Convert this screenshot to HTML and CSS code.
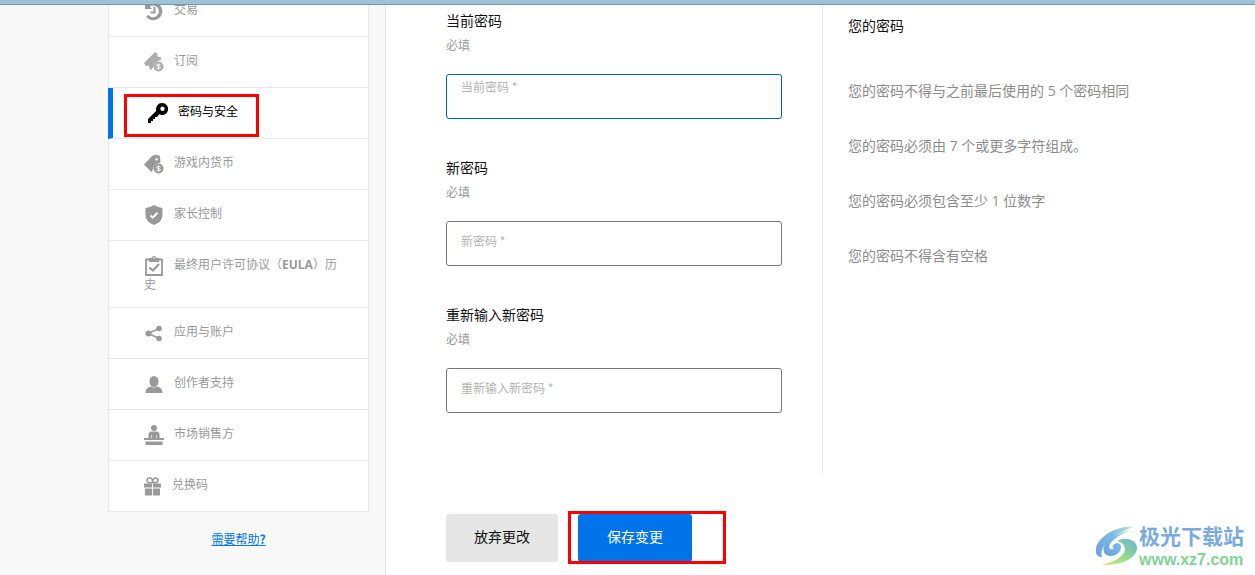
FILE: index.html
```html
<!DOCTYPE html>
<html lang="zh-CN">
<head>
<meta charset="utf-8">
<title>密码与安全</title>
<link rel="stylesheet" href="styles.css">
</head>
<body>
<div class="topbar"></div>
<div class="page">
  <aside class="sidebar">
    <nav class="nav">
      <a class="nav-item" href="#"><svg class="icon" viewBox="0 0 20 20"><path d="M1 1v7h7L5.800 5.600A5.800 5.800 0 1 1 4.500 14L2 15.500A9 9 0 1 0 3.600 3.400z"/><path d="M10.500 6v5.500H6.500" fill="none" stroke="currentColor" stroke-width="2"/></svg>交易</a>
      <a class="nav-item" href="#"><svg class="icon faded" viewBox="0 0 20 20"><path d="M0 11 11 0l2.500 2q-.8 2 .8 3l2.200-.3.800 3.300q-7 .5-8.300 7.500L7 18l-1.700-1.500q.5-3-1.500-3l-1.800.8z"/><circle cx="14.500" cy="14.500" r="5"/><path d="M16.500 12.800q-4-1.500-4 .5c0 1.600 4 .8 4 2.300s-2.500 1.500-4 .4M14.500 11.500v6" class="cut"/></svg>订阅</a>
      <a class="nav-item active" href="#" aria-current="page"><svg class="icon" viewBox="0 0 20 20"><path fill-rule="evenodd" d="M14 0a6 6 0 0 0-5.700 7.800L0 16v4h3v-2h2v-2h2v-2h2l2.300-2.700A6 6 0 1 0 14 0zm.5 3.500a2.200 2.200 0 1 1 0 4.400 2.200 2.200 0 0 1 0-4.400z"/></svg>密码与安全<span class="mark mark-nav"></span></a>
      <a class="nav-item" href="#"><svg class="icon" viewBox="0 0 20 20"><path fill-rule="evenodd" d="M0 10.500 8 2l3.500-1.500L16 2l.5 6.500q-7 .5-8 8L7.500 18zM12.500 4a1.300 1.300 0 1 0 .1 0z"/><circle cx="14.500" cy="14.500" r="5"/><path d="M16.500 12.800q-4-1.500-4 .5c0 1.600 4 .8 4 2.300s-2.500 1.500-4 .4M14.500 11.500v6" class="cut"/></svg>游戏内货币</a>
      <a class="nav-item" href="#"><svg class="icon" viewBox="0 0 20 20"><path d="M10 0q4 2.500 8.500 3v7q0 7-8.500 10-8.500-3-8.500-10V3Q6 2.500 10 0z"/><path d="m6.500 10.500 2.300 2.200 4.700-4.900" fill="none" stroke="#fff" stroke-width="2"/></svg>家长控制</a>
      <a class="nav-item" href="#"><svg class="icon" viewBox="0 0 20 20"><path d="M2 3.500h16V19H2z" fill="none" stroke="currentColor" stroke-width="1.800"/><path fill-rule="evenodd" d="M5 2h2.500q.5-2 2.500-2t2.500 2H15v4H5zm5-.8a1 1 0 1 0 .1 0z"/><path d="m5.500 11.500 3.500 3 6-6.500" fill="none" stroke="currentColor" stroke-width="2.300"/></svg>最终用户许可协议（<b class="latin">EULA</b>）历史</a>
      <a class="nav-item" href="#"><svg class="icon" viewBox="0 0 20 20"><circle cx="4.500" cy="10.500" r="3"/><circle cx="15" cy="5.500" r="2.800"/><circle cx="15" cy="15.500" r="2.800"/><path d="M15 5.500 4.500 10.500 15 15.500" fill="none" stroke="currentColor" stroke-width="1.500"/></svg>应用与账户</a>
      <a class="nav-item" href="#"><svg class="icon" viewBox="0 0 20 20"><ellipse cx="10" cy="7.500" rx="4.500" ry="5.500"/><path d="M1.500 19Q1.500 13.500 7 12.500q3 2 6 0 5.500 1 5.500 6.500z"/></svg>创作者支持</a>
      <a class="nav-item" href="#"><svg class="icon" viewBox="0 0 20 20"><circle cx="10" cy="3" r="3"/><path d="M4.500 13V9.500q0-3 3.500-3h4q3.500 0 3.500 3V13H20v2H0v-2zM1.500 16.500h17V20h-17z"/><path d="M7.500 10v3.500m5-3.500v3.500" class="cut thin"/></svg>市场销售方</a>
      <a class="nav-item" href="#"><svg class="icon icon-small" viewBox="0 0 18 20"><path d="M0 7.500h8v4H0zm9 0h8v4H9zM1 12.500h7v7H1zm8 0h7v7H9z"/><path d="M8.500 6.500Q3 7.500 3 4.500T6 2t2.500 4.500Q9 2 11.500 2T14 4.500t-5.500 2z" fill="none" stroke="currentColor" stroke-width="1.600"/></svg>兑换码</a>
    </nav>
    <a class="help" href="#">需要帮助<b>?</b></a>
  </aside>
  <main class="main">
    <form class="form">
      <div class="fields">
        <div class="field">
          <label for="current">当前密码</label>
          <span class="hint">必填</span>
          <input class="focused" id="current" type="password" placeholder="当前密码 *">
        </div>
        <div class="field">
          <label for="new">新密码</label>
          <span class="hint">必填</span>
          <input id="new" type="password" placeholder="新密码 *">
        </div>
        <div class="field">
          <label for="repeat">重新输入新密码</label>
          <span class="hint">必填</span>
          <input id="repeat" type="password" placeholder="重新输入新密码 *">
        </div>
      </div>
      <div class="actions">
        <button class="btn" type="reset">放弃更改</button>
        <span class="save"><button class="btn primary" type="submit">保存变更</button><span class="mark mark-save"></span></span>
      </div>
    </form>
    <section class="rules">
      <h2>您的密码</h2>
      <p>您的密码不得与之前最后使用的 5 个密码相同</p>
      <p>您的密码必须由 7 个或更多字符组成。</p>
      <p>您的密码必须包含至少 1 位数字</p>
      <p>您的密码不得含有空格</p>
    </section>
  </main>
</div>
<div class="watermark">
  <svg class="swirl" viewBox="0 0 42 40">
    <defs>
      <linearGradient id="g1" x1="0" y1="1" x2="1" y2="0"><stop offset="0" stop-color="#6a9fdd"/><stop offset=".6" stop-color="#7cbce6"/><stop offset="1" stop-color="#c5e8c0"/></linearGradient>
      <linearGradient id="g2" x1="0" y1="1" x2="1" y2="0"><stop offset="0" stop-color="#e6ec80"/><stop offset=".5" stop-color="#8cd98a"/><stop offset="1" stop-color="#6fb0dc"/></linearGradient>
    </defs>
    <path fill="url(#g1)" d="M37 1C20-1 1 12 0 23c-1 6 3 8 6 8-3-9 7-21 31-30z"/>
    <path fill="url(#g1)" d="M34 4C17 8 5 18 8 26c2 6 12 5 16-1 2-4 1-8-3-8-4 1-6 4-3 6-4 1-6-1-4-5 3-5 10-9 20-14z"/>
    <path fill="url(#g2)" d="M21 15c9-5 20-1 20 7 0 10-16 18-37 17 12-2 24-8 25-15 0-5-3-8-8-9z"/>
  </svg>
  <div class="brand"><span class="brand-name">极光下载站</span><span class="brand-url">www.xz7.com</span></div>
</div>
</body>
</html>
```
FILE: styles.css
```css
* { box-sizing: border-box; }
body {
  margin: 0;
  height: 100vh;
  display: flex;
  flex-direction: column;
  overflow: hidden;
  position: relative;
  background: #fff;
  color: #111;
  font: 14px/20px "Noto Sans CJK SC", sans-serif;
}
.topbar {
  flex: none;
  height: 5px;
  background: #9fc3d6;
  border-bottom: 1px solid #7896a8;
}
.page { flex: 1; min-height: 0; display: flex; overflow: hidden; }

.sidebar {
  flex: none;
  width: 386px;
  padding-left: 108px;
  padding-right: 16px;
  background: #f8f8f8;
  border-right: 1px solid #e6e6e6;
}
.nav {
  margin-top: -20px;
  background: #fff;
  border: 1px solid #e8e8e8;
  border-bottom: 0;
}
.nav-item {
  display: block;
  position: relative;
  padding: 15px 25px 15px 35px;
  border-bottom: 1px solid #e8e8e8;
  color: #999;
  font-size: 12px;
  line-height: 16px;
  text-decoration: none;
}
.nav-item.active {
  margin-left: -1px;
  padding-left: 35px;
  border-left: 5px solid #0074e8;
  color: #000;
}
.icon {
  width: 20px;
  height: 20px;
  margin-right: 10px;
  vertical-align: middle;
  fill: currentColor;
}
.icon-small { width: 18px; }
.faded { opacity: .8; }
.cut { fill: none; stroke: #fff; stroke-width: 1; }
.thin { stroke-width: .6; }
.latin { font: bold 12px/16px "Open Sans", sans-serif; }
.help {
  display: block;
  margin-top: 17px;
  color: #0078f2;
  font-size: 12px;
  text-align: center;
}

.mark { position: absolute; border: 3px solid #f00; pointer-events: none; }
.mark-nav { left: 11px; top: 6px; width: 135px; height: 43px; }
.mark-save { left: -10px; top: -3px; width: 158px; height: 53px; }

.main {
  flex: 1;
  min-width: 0;
  display: grid;
  grid-template-columns: minmax(0, 437px) minmax(0, 1fr);
}
.fields {
  padding: 5px 40px 60px 60px;
  border-right: 1px solid #e6e6e6;
}
.field { display: flex; flex-direction: column; }
.field + .field { margin-top: 38px; }
.hint { margin: 5px 0 19px; color: #999; font-size: 12px; line-height: 20px; }
.field input {
  width: 100%;
  height: 45px;
  padding: 0 14px 6px;
  border: 1px solid #777;
  border-radius: 3px;
  outline: 0;
  font: 12px/20px "Noto Sans CJK SC", sans-serif;
}
.field input::placeholder { color: #b3b3b3; opacity: 1; }
.field input.focused { padding-bottom: 20px; border-color: #0062bd; }

.actions { display: flex; gap: 20px; padding: 41px 0 0 60px; }
.save { position: relative; }
.btn {
  height: 48px;
  padding: 0 28px 4px;
  border: 0;
  border-radius: 3px;
  background: #e6e6e6;
  color: #111;
  font: 14px/20px "Noto Sans CJK SC", sans-serif;
}
.primary { padding: 0 29px 4px; background: #0074e8; color: #fff; }

.rules { padding: 10px 20px 0 25px; }
.rules h2 { margin: 0 0 46px; font-size: 14px; font-weight: 400; line-height: 20px; }
.rules p { margin: 0 0 35px; color: #8c8c8c; font-family: "Open Sans", "Noto Sans CJK SC", sans-serif; }

.watermark {
  position: absolute;
  right: 11px;
  bottom: 6px;
  display: flex;
  align-items: center;
  gap: 1px;
}
.swirl { width: 42px; height: 40px; }
.brand { display: flex; flex-direction: column; gap: 4px; }
.brand-name { color: #7aabde; font-size: 21px; font-weight: 700; line-height: 24px; }
.brand-url { color: #7fd495; font: bold 16px/18px "Liberation Sans", sans-serif; }
```
